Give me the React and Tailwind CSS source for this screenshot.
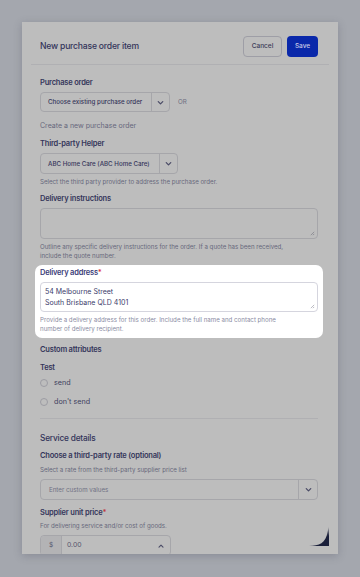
import React from "react";

const Chevron = ({ up = false, className = "" }) => (
  <svg viewBox="0 0 10 10" className={className} fill="none" stroke="currentColor" strokeWidth="1.4" strokeLinecap="round" strokeLinejoin="round">
    {up ? <path d="M2.5 6.5 5 4l2.5 2.5" /> : <path d="M2.5 4 5 6.5 7.5 4" />}
  </svg>
);

const Label = ({ children, className = "" }) => (
  <div className={"text-[7.5px] font-semibold leading-[12px] tracking-[-0.2px] text-[#34355a] " + className}>{children}</div>
);

const Help = ({ children, className = "" }) => (
  <div className={"text-[6.15px] leading-[9px] text-[#67687c] whitespace-nowrap " + className}>{children}</div>
);

const Radio = ({ label, className = "" }) => (
  <div className={"flex items-center gap-[6px] " + className}>
    <span className="w-[8px] h-[8px] rounded-full border border-[#9c9ca3]" />
    <span className="text-[7.2px] leading-[12px] text-[#3e3f5e]">{label}</span>
  </div>
);

export default function App() {
  return (
    <div className="min-h-screen bg-[#a4a7ae] pt-[22px] px-[22px]" style={{ fontFamily: "Inter, 'Noto Sans', sans-serif" }}>
      <div className="relative h-[532px] overflow-hidden bg-[#bdbdbd] shadow-[0_2px_8px_rgba(60,60,80,0.25)]">
        {/* header */}
        <div className="flex items-center justify-between pl-[18px] pr-[20px] pt-[14px] pb-[7px]">
          <div className="text-[8.6px] font-medium tracking-[-0.2px] text-[#33345a]">New purchase order item</div>
          <div className="flex gap-[5px]">
            <button className="h-[21px] w-[39px] rounded-[4px] border border-[#9e9ea6] text-[6.5px] font-medium text-[#3a3b56]">Cancel</button>
            <button className="h-[21px] w-[31px] rounded-[4px] bg-[#0a28aa] text-[6.5px] font-medium text-[#c9cbe6]">Save</button>
          </div>
        </div>
        <div className="mx-[9px] h-px bg-[#b0b0b3]" />

        <div className="pl-[18px] pr-[20px]">
          <Label className="mt-[12px]">Purchase order</Label>
          <div className="mt-[3px] flex items-center">
            <div className="flex h-[20px] w-[130px] items-center rounded-[4px] border border-[#a6a6aa]">
              <div className="flex-1 whitespace-nowrap pl-[7px] text-[6.2px] font-medium text-[#35365a]">Choose existing purchase order</div>
              <div className="flex h-full w-[18px] items-center justify-center border-l border-[#a6a6aa] text-[#4a4b66]">
                <Chevron className="w-[9px] h-[9px]" />
              </div>
            </div>
            <span className="ml-[8px] text-[6.2px] text-[#6c6d80]">OR</span>
          </div>
          <div className="mt-[8px] text-[7px] leading-[12px] text-[#66677c]">Create a new purchase order</div>

          <Label className="mt-[6px]">Third-party Helper</Label>
          <div className="mt-[3px] flex h-[21px] w-[138px] items-center rounded-[4px] border border-[#a6a6aa]">
            <div className="flex-1 whitespace-nowrap pl-[7px] text-[6.2px] font-medium text-[#35365a]">ABC Home Care (ABC Home Care)</div>
            <div className="flex h-full w-[18px] items-center justify-center border-l border-[#a6a6aa] text-[#4a4b66]">
              <Chevron className="w-[9px] h-[9px]" />
            </div>
          </div>
          <Help className="mt-[3px]">Select the third party provider to address the purchase order.</Help>

          <Label className="mt-[7px]">Delivery instructions</Label>
          <div className="relative mt-[3px] h-[31px] rounded-[4px] border border-[#a6a6aa]">
            <svg viewBox="0 0 6 6" className="absolute right-[2px] bottom-[2px] w-[5px] h-[5px]" stroke="#7a7a85" strokeWidth="0.8"><path d="M1 5 5 1M3.5 5 5 3.5" /></svg>
          </div>
          <Help className="mt-[3px]">Outline any specific delivery instructions for the order. If a quote has been received,<br />include the quote number.</Help>

          {/* highlighted field */}
          <div className="-mx-[5px] mt-[5px] rounded-[7px] bg-white px-[5px] pt-[2px] pb-[5px]">
            <div className="text-[7.5px] font-semibold leading-[12px] tracking-[-0.2px] text-[#3b3c78]">Delivery address<span className="text-[#e0393e]">*</span></div>
            <div className="relative mt-[3px] h-[30px] rounded-[4px] border border-[#d5d5de] px-[4px] pt-[3px] text-[7px] leading-[11px] text-[#3b3c6a]">
              <div>54 Melbourne Street</div>
              <div>South Brisbane QLD 4101</div>
              <svg viewBox="0 0 6 6" className="absolute right-[2px] bottom-[2px] w-[5px] h-[5px]" stroke="#9a9aa6" strokeWidth="0.8"><path d="M1 5 5 1M3.5 5 5 3.5" /></svg>
            </div>
            <div className="mt-[3px] whitespace-nowrap text-[6.15px] leading-[9px] text-[#8a8ba3]">Provide a delivery address for this order. Include the full name and contact phone<br />number of delivery recipient.</div>
          </div>

          <Label className="mt-[6px]">Custom attributes</Label>
          <Label className="mt-[6px]">Test</Label>
          <Radio label="send" className="mt-[3px]" />
          <Radio label="don't send" className="mt-[7px]" />

          <div className="mt-[10px] h-px bg-[#b0b0b3]" />

          <div className="mt-[12px] text-[8.3px] font-medium leading-[14px] tracking-[-0.2px] text-[#33345a]">Service details</div>
          <Label className="mt-[5px]">Choose a third-party rate (optional)</Label>
          <Help className="mt-[3px]">Select a rate from the third-party supplier price list</Help>
          <div className="mt-[5px] flex h-[21px] items-center rounded-[4px] border border-[#a6a6aa]">
            <div className="flex-1 pl-[8px] text-[6.2px] text-[#6f7083]">Enter custom values</div>
            <div className="flex h-full w-[19px] items-center justify-center border-l border-[#a6a6aa] text-[#4a4b66]">
              <Chevron className="w-[9px] h-[9px]" />
            </div>
          </div>
          <Label className="mt-[7px]">Supplier unit price<span className="text-[#c0393e]">*</span></Label>
          <Help className="mt-[2px] text-[#4e4f68]">For delivering service and/or cost of goods.</Help>
          <div className="mt-[5px] flex h-[21px] w-[131px] items-center rounded-[4px] border border-[#a6a6aa]">
            <div className="flex h-full w-[21px] items-center justify-center rounded-l-[4px] border-r border-[#a6a6aa] bg-[#b3b3b5] text-[6.5px] text-[#55566d]">$</div>
            <div className="flex-1 pl-[5px] text-[6.8px] text-[#55566d]">0.00</div>
            <Chevron up className="mr-[5px] w-[8px] h-[8px] text-[#4a4b66]" />
          </div>
        </div>

        {/* corner artifact */}
        <svg viewBox="0 0 20 20" className="absolute right-[9px] bottom-[8px] w-[20px] h-[20px]">
          <defs>
            <linearGradient id="fadeV" x1="0" y1="0" x2="0" y2="1">
              <stop offset="0" stopColor="#1a1f3a" stopOpacity="0" />
              <stop offset="0.5" stopColor="#1a1f3a" stopOpacity="1" />
            </linearGradient>
          </defs>
          <path d="M20 0 L20 20 L0 20 C10 20 17 17 18.5 6 Z" fill="url(#fadeV)" />
        </svg>
      </div>
    </div>
  );
}
